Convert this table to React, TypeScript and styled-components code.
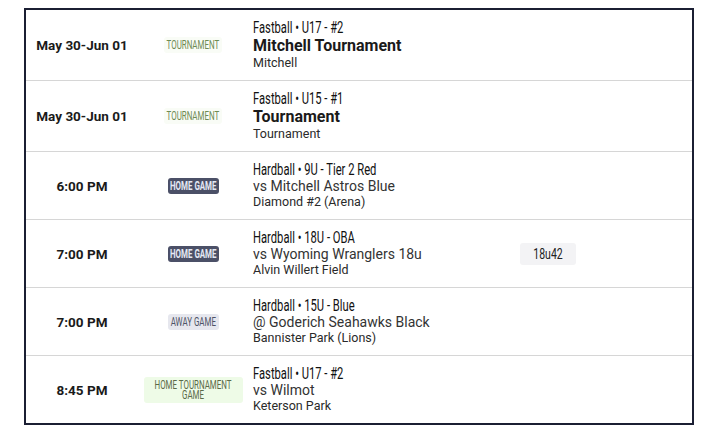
import { PropsWithChildren } from 'react';
import styled, { createGlobalStyle } from 'styled-components';

type Kind = 'tournament' | 'home' | 'away' | 'homeTournament';

type Event = {
    when: string;
    kind: Kind;
    label: string;
    league: string;
    title: string;
    titleBold?: boolean;
    place: string;
    note?: string;
};

const events: Event[] = [
    { when: 'May 30-Jun 01', kind: 'tournament', label: 'TOURNAMENT', league: 'Fastball • U17 - #2', title: 'Mitchell Tournament', titleBold: true, place: 'Mitchell' },
    { when: 'May 30-Jun 01', kind: 'tournament', label: 'TOURNAMENT', league: 'Fastball • U15 - #1', title: 'Tournament', titleBold: true, place: 'Tournament' },
    { when: '6:00 PM', kind: 'home', label: 'HOME GAME', league: 'Hardball • 9U - Tier 2 Red', title: 'vs Mitchell Astros Blue', place: 'Diamond #2 (Arena)' },
    { when: '7:00 PM', kind: 'home', label: 'HOME GAME', league: 'Hardball • 18U - OBA', title: 'vs Wyoming Wranglers 18u', place: 'Alvin Willert Field', note: '18u42' },
    { when: '7:00 PM', kind: 'away', label: 'AWAY GAME', league: 'Hardball • 15U - Blue', title: '@ Goderich Seahawks Black', place: 'Bannister Park (Lions)' },
    { when: '8:45 PM', kind: 'homeTournament', label: 'HOME TOURNAMENT GAME', league: 'Fastball • U17 - #2', title: 'vs Wilmot', place: 'Keterson Park' },
];

const GlobalStyle = createGlobalStyle`
    body {
        margin: 0;
        background: #fff;
        font-family: Roboto, 'Liberation Sans', sans-serif;
        color: #1c1c1c;
    }
`;

// no condensed face is installed, so narrow text is squeezed horizontally
const Narrow = ({ children, $origin = 'center' }: PropsWithChildren<{ $origin?: string }>) => (
    <Squeeze $origin={$origin}>{children}</Squeeze>
);

const App = () => {
    return (
        <>
            <GlobalStyle />
            <Frame>
                {events.map((ev, i) => (
                    <Row key={i} $last={i === events.length - 1}>
                        <When>{ev.when}</When>
                        <BadgeCell>
                            <Badge $kind={ev.kind}>
                                <BadgeText $wrap={ev.kind === 'homeTournament'}>{ev.label}</BadgeText>
                            </Badge>
                        </BadgeCell>
                        <Info>
                            <League>
                                <Narrow $origin="left">{ev.league}</Narrow>
                            </League>
                            <Title $bold={ev.titleBold}>{ev.title}</Title>
                            <Place>{ev.place}</Place>
                        </Info>
                        <NoteCell>
                            {ev.note && (
                                <Note>
                                    <Narrow>{ev.note}</Narrow>
                                </Note>
                            )}
                        </NoteCell>
                    </Row>
                ))}
            </Frame>
        </>
    );
};

export default App;

const Frame = styled.div`
    margin: 8px 0 0 24px;
    width: 670px;
    box-sizing: border-box;
    border: 2px solid #1b1f33;
`;

const Row = styled.div<{ $last?: boolean }>`
    display: grid;
    grid-template-columns: 112px 110px 250px 100px 1fr;
    align-items: center;
    min-height: 67px;
    border-bottom: ${(p) => (p.$last ? 'none' : '1px solid #d6d6d6')};
`;

const When = styled.div`
    text-align: center;
    font-size: 13.5px;
    font-weight: 700;
    color: #1a1a1a;
`;

const BadgeCell = styled.div`
    display: flex;
    justify-content: center;
`;

const badgeColors: Record<Kind, { bg: string; fg: string; w: number; h: number }> = {
    tournament: { bg: '#f9fcf6', fg: '#6d8a52', w: 58, h: 16 },
    home: { bg: '#4b5067', fg: '#e4e8f4', w: 51, h: 16 },
    away: { bg: '#e6e7ee', fg: '#4e5366', w: 51, h: 16 },
    homeTournament: { bg: '#eefbe7', fg: '#5b6a48', w: 99, h: 26 },
};

const Badge = styled.div<{ $kind: Kind }>`
    display: flex;
    align-items: center;
    justify-content: center;
    width: ${(p) => badgeColors[p.$kind].w}px;
    height: ${(p) => badgeColors[p.$kind].h}px;
    border-radius: 3px;
    background: ${(p) => badgeColors[p.$kind].bg};
    color: ${(p) => badgeColors[p.$kind].fg};
    font-weight: ${(p) => (p.$kind === 'home' ? 700 : 400)};
`;

const BadgeText = styled.span<{ $wrap?: boolean }>`
    flex-shrink: 0;
    display: inline-block;
    font-size: 12px;
    line-height: 10px;
    text-align: center;
    white-space: ${(p) => (p.$wrap ? 'normal' : 'nowrap')};
    width: ${(p) => (p.$wrap ? '120px' : 'auto')};
    transform: scaleX(0.66);
`;

const Squeeze = styled.span<{ $origin: string }>`
    display: inline-block;
    white-space: nowrap;
    transform: scaleX(0.7);
    transform-origin: ${(p) => p.$origin};
`;

const Info = styled.div`
    display: flex;
    flex-direction: column;
    padding: 9px 0 9px 5px;
`;

const League = styled.div`
    font-size: 16px;
    line-height: 17px;
    color: #111;
`;

const Title = styled.div<{ $bold?: boolean }>`
    font-size: ${(p) => (p.$bold ? '16px' : '14px')};
    font-weight: ${(p) => (p.$bold ? 700 : 400)};
    line-height: ${(p) => (p.$bold ? '19px' : '16px')};
    color: ${(p) => (p.$bold ? '#1a1a1a' : '#333')};
`;

const Place = styled.div`
    font-size: 12.5px;
    line-height: 16px;
    color: #2a2a2a;
`;

const NoteCell = styled.div`
    display: flex;
    justify-content: center;
`;

const Note = styled.div`
    display: flex;
    align-items: center;
    justify-content: center;
    width: 56px;
    height: 22px;
    font-size: 15px;
    background: #f3f3f5;
    color: #222;
    border-radius: 3px;
`;
